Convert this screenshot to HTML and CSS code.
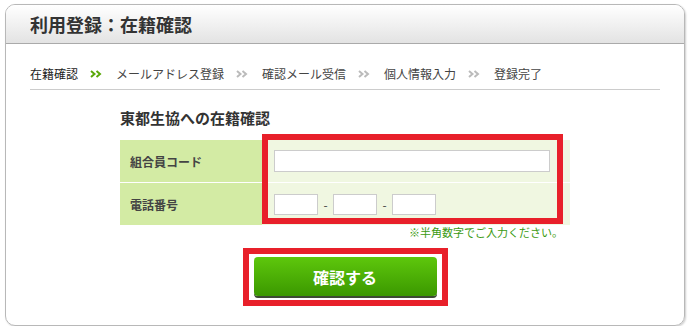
FILE: index.html
```html
<!DOCTYPE html>
<html lang="ja">
<head>
    <meta charset="UTF-8">
    <meta name="viewport" content="width=device-width, initial-scale=1.0">
    <title>利用登録：在籍確認</title>
    <link rel="stylesheet" href="styles.css">
</head>
<body>
    <div class="panel">
        <div class="panel-head">
            <h1>利用登録：在籍確認</h1>
        </div>

        <div class="panel-body">
            <!-- Steps -->
            <ol class="steps">
                <li class="current">在籍確認</li>
                <li class="sep on"><svg width="12" height="8" viewBox="0 0 12 8"><path d="M1 1l3.5 3L1 7M6.5 1L10 4 6.5 7" fill="none" stroke="currentColor" stroke-width="2"/></svg></li>
                <li>メールアドレス登録</li>
                <li class="sep"><svg width="12" height="8" viewBox="0 0 12 8"><path d="M1 1l3.5 3L1 7M6.5 1L10 4 6.5 7" fill="none" stroke="currentColor" stroke-width="2"/></svg></li>
                <li>確認メール受信</li>
                <li class="sep"><svg width="12" height="8" viewBox="0 0 12 8"><path d="M1 1l3.5 3L1 7M6.5 1L10 4 6.5 7" fill="none" stroke="currentColor" stroke-width="2"/></svg></li>
                <li>個人情報入力</li>
                <li class="sep"><svg width="12" height="8" viewBox="0 0 12 8"><path d="M1 1l3.5 3L1 7M6.5 1L10 4 6.5 7" fill="none" stroke="currentColor" stroke-width="2"/></svg></li>
                <li>登録完了</li>
            </ol>

            <!-- Form -->
            <div class="form">
                <h2>東都生協への在籍確認</h2>
                <div class="form-table">
                    <div class="label">組合員コード</div>
                    <div class="value"><input type="text" class="input-wide"></div>
                    <div class="label">電話番号</div>
                    <div class="value">
                        <input type="text" class="input-tel">
                        <span class="dash">-</span>
                        <input type="text" class="input-tel">
                        <span class="dash">-</span>
                        <input type="text" class="input-tel">
                    </div>
                    <div class="mark"></div>
                </div>
                <p class="note">※半角数字でご入力ください。</p>
                <div class="actions">
                    <div class="mark-btn">
                        <button type="button" class="btn">確認する</button>
                    </div>
                </div>
            </div>
        </div>
    </div>
</body>
</html>
```

FILE: styles.css
```css
body {
    margin: 0;
    padding: 4px 6px 0 5px;
    background-color: #fff;
    font-family: "Noto Sans CJK JP", "Noto Sans", sans-serif;
    color: #333;
}
.panel {
    width: 678px;
    height: 320px;
    border: 1px solid #b8b8b8;
    border-radius: 10px;
    box-shadow: 1px 1px 2px rgba(0, 0, 0, 0.2);
    overflow: hidden;
}
.panel-head {
    height: 38px;
    padding-left: 24px;
    background: linear-gradient(#fff, #e3e3e3);
    border-bottom: 1px solid #aaa;
    display: flex;
    align-items: center;
}
.panel-head h1 {
    margin: 0;
    font-size: 18px;
    line-height: 22px;
    font-weight: bold;
    color: #333;
}
.panel-body {
    padding: 0 24px;
}
.steps {
    list-style: none;
    margin: 0;
    padding: 24px 0 9px;
    border-bottom: 1px solid #ccc;
    display: flex;
    align-items: center;
    font-size: 12px;
    line-height: 12px;
    color: #444;
}
.steps .current {
    color: #222;
}
.steps .sep {
    display: flex;
    margin: 0 14px 0 12px;
    color: #bbb;
}
.steps .sep.on {
    color: #5aa80a;
}
.form {
    width: 450px;
    margin-left: 90px;
}
.form h2 {
    margin: 18px 0 12px;
    font-size: 15px;
    line-height: 20px;
    font-weight: bold;
    color: #333;
}
.form-table {
    position: relative;
    display: grid;
    grid-template-columns: 142px 308px;
    grid-template-rows: 42px 42px;
    row-gap: 1px;
    background-color: #fff;
}
.label {
    background-color: #d3eba4;
    padding-left: 10px;
    display: flex;
    align-items: center;
    font-size: 12px;
    font-weight: bold;
    color: #444;
}
.value {
    background-color: #f0f7e1;
    padding-left: 12px;
    display: flex;
    align-items: center;
}
.value input {
    box-sizing: border-box;
    border: 1px solid #ccc;
    background: #fff;
    margin: 0;
    padding: 0 4px;
}
.input-wide {
    width: 276px;
    height: 22px;
}
.input-tel {
    width: 44px;
    height: 21px;
}
.dash {
    width: 15px;
    text-align: center;
    font-size: 12px;
    color: #444;
}
.mark {
    position: absolute;
    left: 142px;
    top: -6px;
    width: 301px;
    height: 90px;
    box-sizing: border-box;
    border: 6px solid #e8202a;
}
.note {
    margin: 0;
    padding-right: 7px;
    text-align: right;
    font-size: 11px;
    line-height: 14px;
    color: #3a9a10;
}
.actions {
    display: flex;
    justify-content: center;
    margin-top: 9px;
}
.mark-btn {
    border: 6px solid #e8202a;
    padding: 3px 5px 4px;
}
.btn {
    display: block;
    width: 183px;
    height: 39px;
    border: none;
    border-radius: 4px;
    background: linear-gradient(#5ec70c, #3b9800);
    box-shadow: 0 2px 0 #3d4a33;
    color: #fff;
    font-family: inherit;
    font-size: 16px;
    font-weight: bold;
    cursor: pointer;
}
```
